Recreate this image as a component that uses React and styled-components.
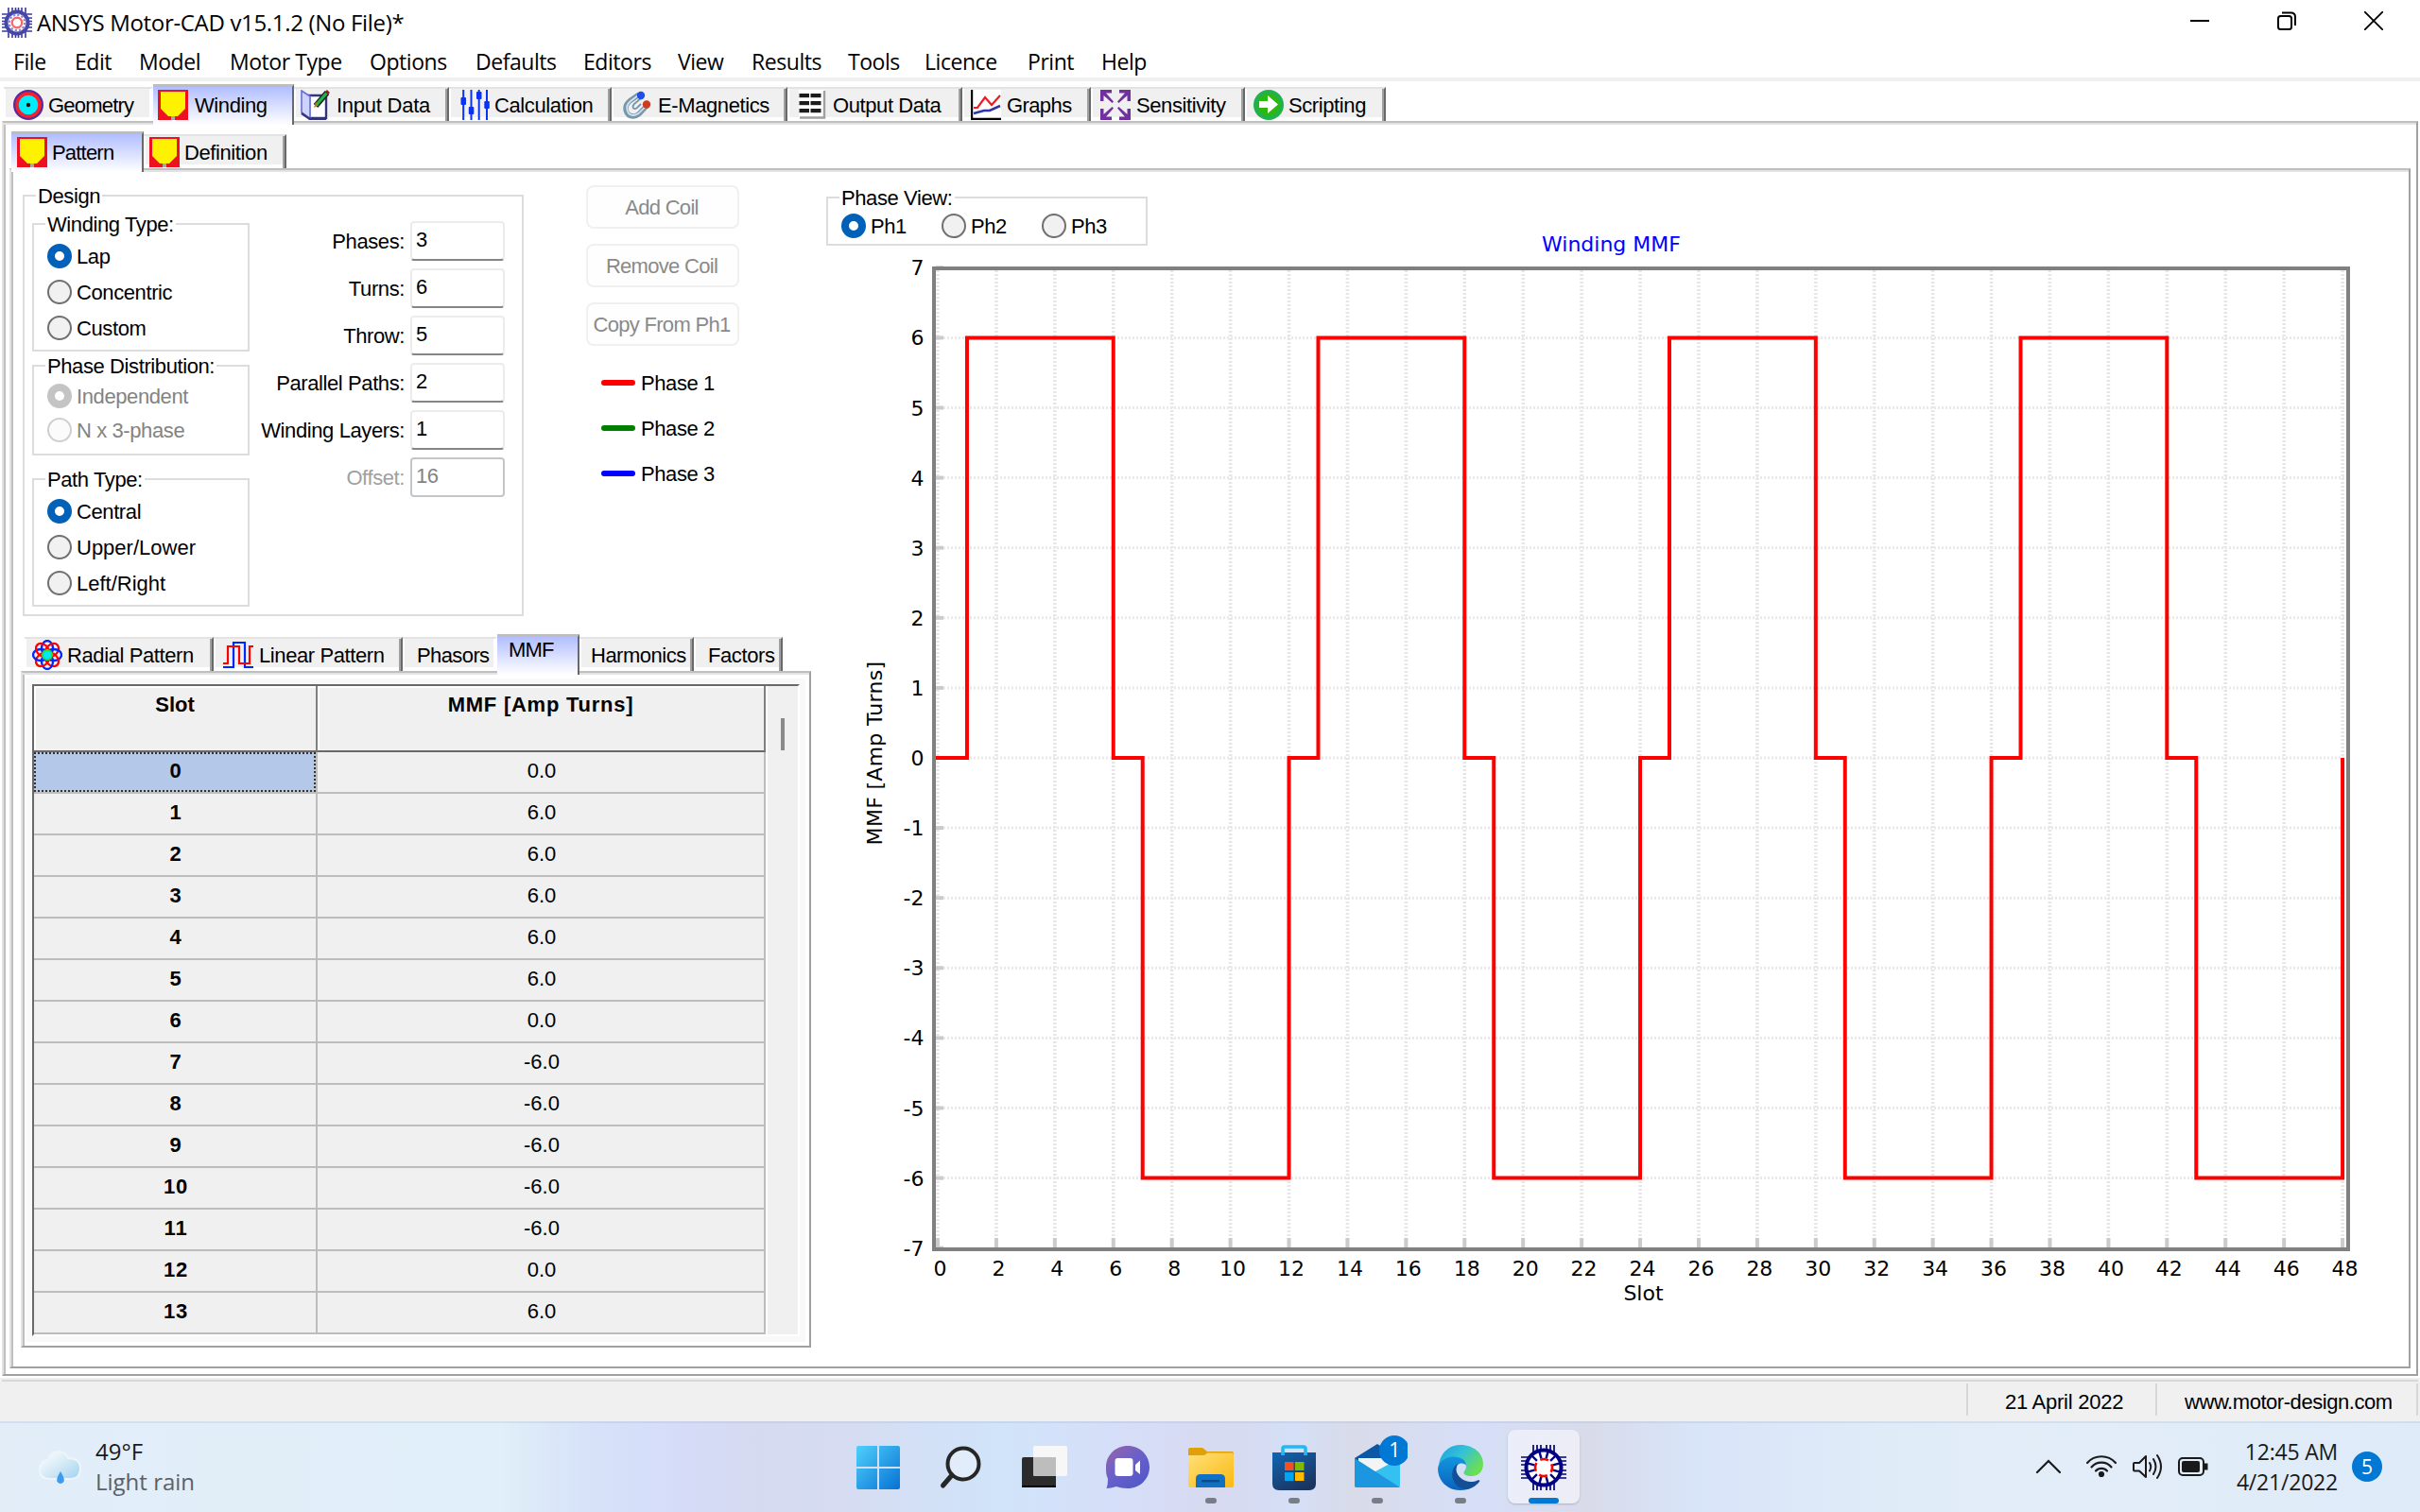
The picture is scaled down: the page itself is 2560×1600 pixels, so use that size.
import React from 'react';
import styled, { createGlobalStyle, css } from 'styled-components';

const UI = `"Liberation Sans", Arial, sans-serif`;
const SEGOE = `"Open Sans", "Noto Sans", sans-serif`;
const CHART = `"DejaVu Sans", Verdana, sans-serif`;

const GlobalStyle = createGlobalStyle`
  * { box-sizing: border-box; }
  body { margin: 0; background: #fff; }
`;

const Screen = styled.div`
  width: 2560px;
  height: 1600px;
  display: flex;
  flex-direction: column;
  overflow: hidden;
  background: #fff;
  color: #000;
  font: 22px/24px ${UI};
  letter-spacing: -0.4px;
  white-space: pre;
`;

/* ---------- title bar and menu ---------- */

const TitleBar = styled.header`
  height: 48px;
  display: flex;
  align-items: center;
  justify-content: space-between;
  padding: 0 39px 0 2px;
  font: 24px/30px ${SEGOE};
  letter-spacing: -0.33px;
`;
const TitleLeft = styled.div`
  display: flex;
  align-items: center;
  gap: 5px;
`;
const WindowButtons = styled.div`
  display: flex;
  gap: 72px;
  padding-bottom: 4px;
`;
const MenuBar = styled.nav`
  height: 38px;
  padding-left: 14px;
  border-bottom: 4px solid #f0f0f0;
  display: grid;
  grid-template-columns: 65px 68px 96px 148px 112px 114px 100px 78px 102px 81px 109px 78px 60px;
  align-items: center;
  font: 23px/30px ${SEGOE};
  letter-spacing: -0.45px;
`;

/* ---------- tabs and pages ---------- */

const TabStrip = styled.div`
  display: flex;
  align-items: flex-end;
  height: ${(p) => p.$h}px;
  padding-left: ${(p) => p.$left}px;
  flex: none;
`;
const TabBox = styled.div`
  width: ${(p) => p.$w}px;
  display: flex;
  align-items: center;
  padding-left: ${(p) => p.$pad}px;
  gap: ${(p) => p.$gap}px;
  flex: none;
  ${(p) =>
    p.$active
      ? css`
          height: 43px;
          margin-bottom: -4px;
          position: relative;
          z-index: 1;
          border-top: 3px solid #bdbdbd;
          border-right: 2px solid #696969;
          background: linear-gradient(#b1beff, #ffffff);
          padding-bottom: 2px;
        `
      : css`
          height: 36px;
          border-top: 2px solid #e3e3e3;
          border-right: 2px solid ${p.$tucked ? '#fff' : '#696969'};
          background: linear-gradient(#f0f0f0 30px, #fff 30px);
          box-shadow: inset 2px 0 #fff, inset -2px 0 ${p.$tucked ? '#fff' : '#a0a0a0'};
        `}
`;
const TabLabel = styled.span`
  padding-top: ${(p) => (p.$raised ? 0 : 2)}px;
  padding-bottom: ${(p) => (p.$raised ? 11 : 0)}px;
  letter-spacing: ${(p) => p.$ls ?? -0.4}px;
`;

const Page = styled.section`
  border-style: solid;
  border-width: 2px;
  border-color: #bfbfbf #a0a0a0 #a0a0a0 #e3e3e3;
  box-shadow: inset 0 2px #e3e3e3, inset 2px 0 #bfbfbf;
  display: flex;
  flex-direction: column;
  min-height: 0;
`;
const OuterPage = styled(Page)`
  margin: 0 2px 2px;
  height: 1328px;
  padding: 2px 6px 6px 6px;
`;
const InnerPage = styled(Page)`
  flex: 1;
  flex-direction: row;
  padding: 2px 0 0 2px;
`;
const LeftColumn = styled.div`
  width: 856px;
  display: flex;
  flex-direction: column;
`;
const RightColumn = styled.div`
  flex: 1;
  display: flex;
  flex-direction: column;
`;
const TopRow = styled.div`
  display: flex;
  align-items: flex-start;
  height: 489px;
  padding: 12px 0 0 10px;
  flex: none;
`;

/* ---------- groups, radios, fields ---------- */

const GroupBox = styled.fieldset`
  margin: 0;
  padding: 0;
  min-width: 0;
  width: ${(p) => p.$w}px;
  height: ${(p) => p.$h}px;
  border: 2px solid #dcdcdc;
`;
const GroupTitle = styled.legend`
  margin-left: 12px;
  padding: 2px 2px 0;
  line-height: 24px;
`;
const DesignBody = styled.div`
  display: flex;
  padding: 4px 0 0 8px;
`;
const GroupStack = styled.div`
  display: flex;
  flex-direction: column;
`;
const Spacer = styled.div`
  height: ${(p) => p.$h}px;
  flex: none;
`;
const RadioList = styled.div`
  display: flex;
  flex-direction: ${(p) => (p.$row ? 'row' : 'column')};
  padding: ${(p) => p.$top}px 0 0 14px;
`;
const RadioRow = styled.label`
  display: flex;
  align-items: center;
  gap: 5px;
  height: ${(p) => p.$h}px;
  width: ${(p) => (p.$w ? p.$w + 'px' : 'auto')};
  color: ${(p) => (p.$disabled ? '#838383' : '#000')};
`;
const Dot = styled.span`
  width: 26px;
  height: 26px;
  border-radius: 50%;
  flex: none;
  ${(p) =>
    p.$on
      ? css`
          border: 8px solid ${p.$disabled ? '#c4c4c4' : '#0160b8'};
          background: #fff;
        `
      : css`
          border: 2px solid ${p.$disabled ? '#cfcfcf' : '#707070'};
          background: ${p.$disabled ? '#fbfbfb' : '#f1f1f1'};
        `}
`;
const RadioText = styled.span`
  padding-top: 2px;
  letter-spacing: ${(p) => (p.$wide ? 0 : -0.4)}px;
`;
const Form = styled.div`
  width: 270px;
  display: flex;
  flex-direction: column;
  gap: 8px;
  padding-top: 10px;
`;
const FieldRow = styled.div`
  display: flex;
  justify-content: flex-end;
  align-items: center;
  gap: 6px;
  height: 42px;
  color: ${(p) => (p.$disabled ? '#a0a0a0' : '#000')};
`;
const FieldLabel = styled.span`
  padding-top: 2px;
`;
const FieldBox = styled.div`
  width: 100px;
  height: 42px;
  border: 2px solid ${(p) => (p.$disabled ? '#c3c6c9' : '#ececec')};
  border-bottom-color: ${(p) => (p.$disabled ? '#c3c6c9' : '#868686')};
  border-radius: 4px;
  padding: 6px 0 0 4px;
  color: ${(p) => (p.$disabled ? '#838383' : '#000')};
`;

const CoilColumn = styled.div`
  margin-left: 66px;
  padding-top: 2px;
  width: 162px;
  display: flex;
  flex-direction: column;
`;
const CoilButton = styled.button`
  width: 162px;
  height: 46px;
  margin: 0 0 16px;
  padding: 2px 2px 0 0;
  border: 2px solid #f0f0f0;
  border-radius: 8px;
  background: #fefefe;
  color: #8a8a8a;
  font: 22px/24px ${UI};
  letter-spacing: -0.7px;
`;
const PhaseKeys = styled.div`
  margin-top: -1px;
  display: flex;
  flex-direction: column;
`;
const PhaseKey = styled.div`
  display: flex;
  align-items: center;
  height: 48px;
  padding-left: 16px;
  gap: 6px;
`;
const Swatch = styled.span`
  width: 36px;
  height: 6px;
  border-radius: 3px;
  background: ${(p) => p.$c};
`;

/* ---------- MMF table ---------- */

const TablePage = styled(Page)`
  margin-left: 8px;
  width: 836px;
  height: 716px;
  padding: 6px 4px 4px 4px;
`;
const TableFrame = styled.div`
  background: #f9f9f9;
  height: 702px;
  padding: 6px 6px 0 6px;
`;
const GridArea = styled.div`
  display: flex;
  height: 690px;
  border-top: 2px solid #696969;
  border-left: 2px solid #696969;
  border-right: 2px solid #fff;
  border-bottom: 2px solid #fff;
  background: #f0f0f0;
`;
const Grid = styled.div`
  display: grid;
  width: 776px;
  grid-template-columns: 300px 474px;
  grid-template-rows: 70px;
  grid-auto-rows: 44px;
  border-right: 2px solid #fff;
  letter-spacing: 0;
`;
const HeadCell = styled.div`
  border-right: 2px solid #808080;
  border-bottom: 2px solid #696969;
  box-shadow: inset 2px 2px #fff;
  text-align: center;
  font-weight: bold;
  padding-top: 8px;
  letter-spacing: ${(p) => p.$ls}px;
`;
const Cell = styled.div`
  display: flex;
  border-right: 2px solid #bdbdbd;
  border-bottom: 2px solid #bdbdbd;
  ${(p) => p.$key && 'font-weight: bold; letter-spacing: 0.8px;'}
`;
const CellText = styled.span`
  flex: 1;
  text-align: center;
  border: 2px dotted ${(p) => (p.$selected ? '#3c3020' : 'transparent')};
  background: ${(p) => (p.$selected ? '#b4c9e9' : 'transparent')};
  padding: 6px 0 0 2px;
`;
const ScrollTrack = styled.div`
  flex: 1;
  display: flex;
  justify-content: center;
  align-items: flex-start;
  padding-top: 34px;
`;
const ScrollThumb = styled.div`
  width: 4px;
  height: 34px;
  background: #8a8a8a;
`;

/* ---------- chart ---------- */

const ChartHead = styled.div`
  display: flex;
  height: 88px;
  padding: 14px 0 0 4px;
  flex: none;
`;
const ChartTitle = styled.h1`
  margin: 0 0 0 417px;
  align-self: flex-end;
  font: 22px/22px ${CHART};
  letter-spacing: 0;
  color: #0000ff;
`;
const Plot = styled.svg`
  display: block;
  font: 22px ${CHART};
  letter-spacing: 0;
`;
const AxisTitle = styled.text`
  letter-spacing: 0.3px;
`;

/* ---------- status bar and taskbar ---------- */

const StatusBar = styled.footer`
  height: 46px;
  flex: none;
  background: #f0f0f0;
  padding: 2px 2px 0 2px;
`;
const StatusCells = styled.div`
  border-top: 2px solid #d7d7d7;
  height: 42px;
  padding: 2px 0 4px;
  display: flex;
  justify-content: flex-end;
`;
const StatusCell = styled.div`
  width: ${(p) => p.$w}px;
  border-left: 2px solid #d7d7d7;
  border-right: ${(p) => (p.$last ? '2px solid #d7d7d7' : '0')};
  display: flex;
  align-items: center;
  padding: 5px 0 0 ${(p) => p.$pad}px;
  letter-spacing: ${(p) => p.$ls}px;
`;
const Taskbar = styled.footer`
  height: 96px;
  flex: none;
  display: flex;
  align-items: center;
  background: linear-gradient(
    90deg,
    #e2edf8 0,
    #e1eff9 420px,
    #e0eff9 530px,
    #d7e2f8 620px,
    #d5dcf8 720px,
    #d5daf0 800px,
    #d6dcf1 890px,
    #d0e4fa 1060px,
    #d6def8 1180px,
    #d7daf0 1300px,
    #d4dff6 1370px,
    #d9dbe9 1430px,
    #d6dff8 1560px,
    #d9dbea 1680px,
    #d8e4f8 1790px,
    #e0ebf8 1980px,
    #e2edf8 2150px,
    #dfebf8 2560px
  );
  box-shadow: inset 0 2px rgba(120, 140, 180, 0.14);
  font: 24px/32px ${SEGOE};
`;
const Weather = styled.div`
  width: 885px;
  padding-left: 38px;
  display: flex;
  align-items: center;
  gap: 11px;
  letter-spacing: 0;
`;
const WeatherText = styled.div`
  display: flex;
  flex-direction: column;
  color: #1a1a1a;
`;
const Muted = styled.span`
  color: #5b6068;
`;
const Apps = styled.div`
  display: flex;
  flex: 1;
`;
const AppSlot = styled.div`
  width: 88px;
  height: 96px;
  display: flex;
  align-items: center;
  justify-content: center;
`;
const AppTile = styled.div`
  width: 76px;
  height: 78px;
  border-radius: 8px;
  display: flex;
  flex-direction: column;
  align-items: center;
  justify-content: flex-end;
  background: ${(p) => (p.$active ? 'rgba(255,255,255,0.5)' : 'transparent')};
  box-shadow: ${(p) => (p.$active ? '0 1px 2px rgba(90,100,130,0.35)' : 'none')};
`;
const Running = styled.span`
  margin-top: 8px;
  width: ${(p) => (p.$active ? 32 : 12)}px;
  height: 6px;
  border-radius: 3px;
  background: ${(p) => (p.$active ? '#0078d4' : p.$on ? '#787d88' : 'transparent')};
`;
const Tray = styled.div`
  display: flex;
  align-items: center;
  padding-right: 40px;
`;
const TrayIcons = styled.div`
  display: flex;
  align-items: center;
  gap: 16px;
  margin-right: 27px;
`;
const Chevron = styled.svg`
  margin-right: 7px;
`;
const Clock = styled.div`
  width: 110px;
  text-align: right;
  color: #1a1a1a;
  font-size: 23px;
  letter-spacing: -0.2px;
`;
const Notice = styled.span`
  margin-left: 15px;
  width: 32px;
  height: 32px;
  border-radius: 50%;
  background: #0078d4;
  color: #fff;
  text-align: center;
  font-size: 21px;
  letter-spacing: 0;
`;

/* ---------- icons ---------- */

const MotorIcon = ({ size = 48 }) => {
  const leads = [13, 17, 21, 27, 31, 35];
  return (
    <svg width={size} height={size} viewBox="0 0 48 48">
      <g stroke="#000080" strokeWidth="1.7">
        {leads.map((v) => (
          <path key={v} d={`M${v} 0V10M${v} 38V48M0 ${v}H10M38 ${v}H48`} />
        ))}
      </g>
      <circle cx="24" cy="24" r="18.5" fill="#fff" stroke="#000080" strokeWidth="4" />
      <g stroke="#000080" strokeWidth="2.4">
        {Array.from({ length: 12 }, (_, i) => (
          <path key={i} d="M24 6V14" transform={`rotate(${i * 30 + 15} 24 24)`} />
        ))}
      </g>
      <circle cx="24" cy="24" r="9" fill="#fff" stroke="#f00" strokeWidth="2.6" strokeDasharray="9 5.1" strokeDashoffset="4" />
    </svg>
  );
};

/* Small caption version: softer ring, teeth reaching the edge */
const MotorCaptionIcon = () => (
  <svg width="32" height="32" viewBox="0 0 32 32">
    <g stroke="#3a3a9e" strokeWidth="1.6">
      {[7, 11, 14.5, 17.5, 21, 25].map((v) => (
        <path key={v} d={`M${v} 0V32M0 ${v}H32`} />
      ))}
    </g>
    <circle cx="16" cy="16" r="11.5" fill="#fff" stroke="#4646a6" strokeWidth="4" />
    <circle cx="16" cy="16" r="8.6" fill="none" stroke="#8c8cd0" strokeWidth="3" strokeDasharray="2.4 2.1" />
    <circle cx="16" cy="16" r="5.200" fill="#fff" stroke="#f26a6a" strokeWidth="2.400" />
  </svg>
);

const Icon32 = ({ children }) => (
  <svg width="32" height="32" viewBox="0 0 32 32">
    {children}
  </svg>
);

const GeometryIcon = () => (
  <Icon32>
    <circle cx="16" cy="16" r="14" fill="#0ff" stroke="#5c2a9c" strokeWidth="4" />
    <circle cx="16" cy="16" r="12" fill="#00eefa" stroke="#f5212c" strokeWidth="3.4" />
    <circle cx="16" cy="16" r="2.2" fill="#111" />
  </Icon32>
);
const WindingIcon = () => (
  <Icon32>
    <rect width="32" height="32" fill="#ec1020" />
    <path d="M3 2H29V20L21 28H11L3 20Z" fill="#fff200" />
    <rect x="14" y="28" width="4" height="4" fill="#a8a8a8" />
  </Icon32>
);
const InputIcon = () => (
  <Icon32>
    <path d="M10 6H28V30H10Z" fill="#fff" stroke="#35357c" strokeWidth="2.4" />
    <path d="M2 1L11 7V31L2 24Z" fill="#cdd2ff" stroke="#6670d8" strokeWidth="1.6" />
    <path d="M2 25L11 31H28" fill="none" stroke="#33337a" strokeWidth="2.4" />
    <path d="M17 17L29 3" stroke="#222" strokeWidth="6" />
    <path d="M18 15.500L28.500 3.500" stroke="#22b14c" strokeWidth="3.4" />
    <path d="M15 19L17 13L20 16.500Z" fill="#b08020" />
    <path d="M28 1L31 4" stroke="#8a2020" strokeWidth="2.600" />
  </Icon32>
);
const CalcIcon = () => (
  <Icon32>
    <g fill="#0a32f0">
      <rect x="2.200" width="2" height="32" /><rect x="10.500" width="2" height="32" />
      <rect x="18.700" width="2" height="32" /><rect x="27" width="2" height="32" />
      <rect x="0.500" y="8" width="5.500" height="8" rx="1" /><rect x="8.800" y="18" width="5.500" height="8" rx="1" />
      <rect x="17" y="2" width="5.500" height="8" rx="1" /><rect x="25.300" y="12" width="5.500" height="8" rx="1" />
    </g>
  </Icon32>
);
const MagnetIcon = () => (
  <Icon32>
    <path d="M17 5L7 12C0 18 3 28 11 28C15 28 17 26 25 17" fill="none" stroke="#7797ad" strokeWidth="5.500" />
    <path d="M16 6L7.500 12.500C1.500 18 4.500 27 11 27C15 27 17 25 24 17.500" fill="none" stroke="#d4e2ea" strokeWidth="1.800" />
    <path d="M19 9L12 15C9 18 11 22 15 19L19 15" fill="none" stroke="#7797ad" strokeWidth="1.800" />
    <circle cx="19" cy="6" r="4.200" fill="#1f4fe8" />
    <circle cx="25" cy="15.500" r="4.200" fill="#d23a1f" />
  </Icon32>
);
const OutputIcon = () => (
  <Icon32>
    <path d="M0 0H27V29H0Z" fill="#fff" />
    <path d="M27 1V29.500H1" fill="none" stroke="#a0a0a0" strokeWidth="2.400" />
    <g fill="#1c1c1c">
      {[4, 12, 20].map((y) => (
        <React.Fragment key={y}>
          <rect x="0.500" y={y} width="10.500" height="4.200" />
          <rect x="12.500" y={y} width="11" height="4.200" />
        </React.Fragment>
      ))}
    </g>
  </Icon32>
);
const GraphIcon = () => (
  <Icon32>
    <rect width="32" height="32" fill="#fff" />
    <path d="M1 0V31H32" fill="none" stroke="#000" strokeWidth="2.400" />
    <path d="M3 19H7L15 8L22 16L31 6" fill="none" stroke="#ed1c24" strokeWidth="2.200" />
    <path d="M3 25L14 22H20L31 17" fill="none" stroke="#2b35a8" strokeWidth="2.600" />
  </Icon32>
);
const SensitivityIcon = () => (
  <Icon32>
    {[0, 90, 180, 270].map((a) => (
      <g key={a} transform={`rotate(${a} 16 16)`}>
        <path d="M0 0H12V3.500H6L14 12.500L12.500 14L3.500 6V12H0Z" fill="#722f9e" />
      </g>
    ))}
  </Icon32>
);
const ScriptIcon = () => (
  <Icon32>
    <circle cx="16" cy="16" r="16" fill="#22b14c" />
    <circle cx="16" cy="16" r="11.500" fill="#2db80f" />
    <path d="M6 12H15V6L26 15.500L15 25V19H6Z" fill="#fff" />
  </Icon32>
);
const RadialIcon = () => (
  <Icon32>
    {Array.from({ length: 8 }, (_, i) => (
      <ellipse key={i} cx="16" cy="9" rx="6" ry="8" fill="none" strokeWidth="2.300"
        stroke={i % 2 ? '#ff0000' : '#0026ff'} transform={`rotate(${i * 45} 16 16)`} />
    ))}
    <circle cx="16" cy="16" r="5" fill="#00e8ff" stroke="#19e23c" strokeWidth="2" />
  </Icon32>
);
const LinearIcon = () => (
  <Icon32>
    <path d="M0 29H11V3H23V29H32" fill="none" stroke="#0026ff" strokeWidth="2.200" />
    <path d="M0 25H5V7H17V25H28V7H32" fill="none" stroke="#ff0000" strokeWidth="2.200" />
  </Icon32>
);

const StartIcon = () => (
  <svg width="48" height="48" viewBox="0 0 48 48">
    <defs>
      <linearGradient id="st" x1="0" y1="0" x2="1" y2="1">
        <stop offset="0" stopColor="#4fd0fb" /><stop offset="1" stopColor="#0672d4" />
      </linearGradient>
    </defs>
    <path fill="url(#st)" d="M3 1H23V23H1V3Q1 1 3 1ZM25 1H45Q47 1 47 3V23H25ZM1 25H23V47H3Q1 47 1 45ZM25 25H47V45Q47 47 45 47H25Z" />
  </svg>
);
const SearchIcon = () => (
  <svg width="48" height="48" viewBox="0 0 48 48">
    <circle cx="26" cy="20" r="16.500" fill="rgba(255,255,255,.35)" stroke="#262626" strokeWidth="4" />
    <path d="M14 32L4.500 43" stroke="#262626" strokeWidth="5" strokeLinecap="round" />
  </svg>
);
const TaskViewIcon = () => (
  <svg width="48" height="48" viewBox="0 0 48 48">
    <rect x="0" y="13" width="36" height="32" rx="2" fill="#2b2b2b" />
    <rect x="0" y="43" width="36" height="2" fill="#000" />
    <rect x="12" y="1" width="36" height="32" rx="2" fill="#f7f7f7" />
    <path d="M12 13H36V33H14Q12 33 12 31Z" fill="#bdbdbd" />
  </svg>
);
const ChatIcon = () => (
  <svg width="48" height="48" viewBox="0 0 48 48">
    <defs>
      <linearGradient id="ch" x1="0" y1="0" x2="0.8" y2="1">
        <stop offset="0" stopColor="#9a65a8" /><stop offset=".5" stopColor="#6a60c8" /><stop offset="1" stopColor="#5058c8" />
      </linearGradient>
    </defs>
    <path d="M24 1C37 1 47 11 47 23.500C47 36 37 46 24 46C19 46 15 45 12 44Q6 46 1.500 46Q3 42 3 36C1 32 1 28 1 23.500C1 11 11 1 24 1Z" fill="url(#ch)" />
    <rect x="10.500" y="14" width="19" height="19" rx="3" fill="#fff" />
    <path d="M32 21L37 16.500V31L32 27Z" fill="#fff" />
  </svg>
);
const FolderIcon = () => (
  <svg width="48" height="48" viewBox="0 0 48 48">
    <defs>
      <linearGradient id="fo" x1="0" y1="0" x2="1" y2="1">
        <stop offset="0" stopColor="#ffe07a" /><stop offset="1" stopColor="#fbb911" />
      </linearGradient>
    </defs>
    <path d="M0 5Q0 3 2 3H14Q16 3 17.500 5L20 7H46Q48 7 48 9V20H0Z" fill="#e0a008" />
    <path d="M0 11H16Q18 11 20 8.500H46Q48 8.500 48 10.500V43Q48 45 46 45H2Q0 45 0 43Z" fill="url(#fo)" />
    <path d="M8 45V36Q8 31 13 31H34Q39 31 39 36V45Z" fill="#0f70c4" />
    <rect x="14" y="37" width="19" height="2.400" rx="1" fill="#0a4c8c" />
  </svg>
);
const StoreIcon = () => (
  <svg width="48" height="48" viewBox="0 0 48 48">
    <defs>
      <linearGradient id="sr" x1="0" y1="0" x2=".6" y2="1">
        <stop offset="0" stopColor="#1066b4" /><stop offset="1" stopColor="#1b3561" />
      </linearGradient>
    </defs>
    <path d="M1 8H47V41Q47 48 40 48H8Q1 48 1 41Z" fill="url(#sr)" />
    <path d="M12 11V4Q12 2 14 2H34Q36 2 36 4V11" fill="none" stroke="#21b8f3" strokeWidth="3.600" />
    <rect x="14" y="18" width="9.500" height="9" fill="#f25022" /><rect x="25" y="18" width="9.500" height="9" fill="#7fba00" />
    <rect x="14" y="29" width="9.500" height="9" fill="#00a4ef" /><rect x="25" y="29" width="9.500" height="9" fill="#ffb900" />
  </svg>
);
const MailIcon = () => (
  <svg width="64" height="62" viewBox="-8 -14 64 62">
    <path d="M0 14L24 -1L48 14V30H0Z" fill="#0b59a6" />
    <path d="M4 14H44V26L24 30L4 18Z" fill="#f4f4f6" />
    <path d="M48 14V43Q48 45 46 45H2Q0 45 0 43V40Z" fill="#35c0f2" />
    <path d="M0 14L48 45H2Q0 45 0 43Z" fill="#1c96de" />
    <circle cx="42" cy="6" r="16" fill="#0078d4" />
    <text x="42" y="13" fontSize="21" fill="#fff" textAnchor="middle">1</text>
  </svg>
);
const EdgeIcon = () => (
  <svg width="48" height="48" viewBox="0 0 48 48">
    <defs>
      <linearGradient id="ea" x1="0" y1="0" x2="1" y2=".6">
        <stop offset="0" stopColor="#1a9fe0" /><stop offset=".5" stopColor="#35c1d8" /><stop offset="1" stopColor="#6be04f" />
      </linearGradient>
      <linearGradient id="eb" x1="0" y1="0" x2="0" y2="1">
        <stop offset="0" stopColor="#1296de" /><stop offset="1" stopColor="#0a62bc" />
      </linearGradient>
    </defs>
    <path d="M1 21C3 8 12 0 24 0C38 0 48 9 48 20C48 28 43 33 36 33C30 33 27 31 27.500 29C28.500 27 30 26 30 22C30 17 24 13 17 13C8 13 3 17 1 21Z" fill="url(#ea)" />
    <path d="M17 12.500C24 12.500 30 16 30 22C29 19 20 17 19 26C18 36 26 42 34 42C38 42 41 41 44 38C40 44 33 48 24 48C9 48 0 37 0 25C1 17 8 12.500 17 12.500Z" fill="url(#eb)" />
    <path d="M21 20C16 23 14 30 16 36C18 43 24 47 30 47C37 46 42 42 44.500 38C44 37 43 37 42 37.500C32 42 21 36 19.500 27C19.500 24 20 22 21 20Z" fill="#124f96" />
  </svg>
);

/* ---------- data ---------- */

const MENUS = ['File', 'Edit', 'Model', 'Motor Type', 'Options', 'Defaults', 'Editors', 'View', 'Results', 'Tools', 'Licence', 'Print', 'Help'];

const MAIN_TABS = [
  { label: 'Geometry', icon: GeometryIcon, w: 158, pad: 10, gap: 5, tucked: true, ls: -0.8 },
  { label: 'Winding', icon: WindingIcon, w: 149, pad: 5, gap: 7, active: true },
  { label: 'Input Data', icon: InputIcon, w: 164, pad: 6, gap: 7, ls: -0.25 },
  { label: 'Calculation', icon: CalcIcon, w: 172, pad: 12, gap: 4 },
  { label: 'E-Magnetics', icon: MagnetIcon, w: 186, pad: 12, gap: 5 },
  { label: 'Output Data', icon: OutputIcon, w: 185, pad: 12, gap: 4 },
  { label: 'Graphs', icon: GraphIcon, w: 136, pad: 9, gap: 6, ls: -0.6 },
  { label: 'Sensitivity', icon: SensitivityIcon, w: 163, pad: 10, gap: 6 },
  { label: 'Scripting', icon: ScriptIcon, w: 149, pad: 9, gap: 5 },
];
const SUB_TABS = [
  { label: 'Pattern', icon: WindingIcon, w: 140, pad: 6, gap: 5, active: true, ls: -0.8 },
  { label: 'Definition', icon: WindingIcon, w: 151, pad: 6, gap: 5 },
];
const VIEW_TABS = [
  { label: 'Radial Pattern', icon: RadialIcon, w: 200, pad: 8, gap: 5 },
  { label: 'Linear Pattern', icon: LinearIcon, w: 200, pad: 10, gap: 6 },
  { label: 'Phasors', w: 100, pad: 15, tucked: true, ls: -0.6 },
  { label: 'MMF', w: 87, pad: 12, active: true, raised: true, ls: -0.8 },
  { label: 'Harmonics', w: 121, pad: 12, ls: -0.5 },
  { label: 'Factors', w: 94, pad: 15 },
];
const FIELDS = [
  ['Phases:', '3'],
  ['Turns:', '6'],
  ['Throw:', '5'],
  ['Parallel Paths:', '2'],
  ['Winding Layers:', '1'],
  ['Offset:', '16', true],
];
const mmfAt = (slot) => {
  const s = slot % 12;
  if (s === 0 || s === 6) return 0;
  return s < 6 ? 6 : -6;
};
const ROWS = Array.from({ length: 14 }, (_, slot) => mmfAt(slot));

/* ---------- composed parts ---------- */

const Tabs = ({ items, h, left }) => (
  <TabStrip $h={h} $left={left}>
    {items.map(({ label, icon: Icon, w, pad, gap, active, tucked, raised, ls }) => (
      <TabBox key={label} $w={w} $pad={pad} $gap={gap || 0} $active={active} $tucked={tucked}>
        {Icon && <Icon />}
        <TabLabel $raised={raised} $ls={ls}>{label}</TabLabel>
      </TabBox>
    ))}
  </TabStrip>
);

const Radios = ({ options, h, w, top, row, disabled }) => (
  <RadioList $top={top} $row={row}>
    {options.map((text, i) => (
      <RadioRow key={text} $h={h} $w={w} $disabled={disabled}>
        <Dot $on={i === 0} $disabled={disabled} />
        <RadioText $wide={text.includes('/')}>{text}</RadioText>
      </RadioRow>
    ))}
  </RadioList>
);

const Chart = () => {
  const X = (s) => 992 + s * 30.96;
  const Y = (v) => 802 - v * 74.1;
  const slots = Array.from({ length: 25 }, (_, i) => i * 2);
  const levels = Array.from({ length: 15 }, (_, i) => 7 - i);
  let d = `M990 ${Y(0)}`;
  for (let s = 1; s <= 48; s++) d += `H${X(s)}V${Y(mmfAt(s))}`;
  return (
    <Plot width="1678" height="1176" viewBox="870 270 1678 1176">
      <g stroke="#e6e6e6" strokeWidth="3.6" strokeDasharray="2 2">
        {slots.map((s) => <path key={s} d={`M${X(s)} 286V1320`} />)}
      </g>
      <g stroke="#e9e9e9" strokeWidth="3" strokeDasharray="2 2">
        {levels.slice(1, -1).map((v) => <path key={v} d={`M990 ${Y(v)}H2482`} />)}
      </g>
      <g stroke="#cbcbcb" strokeWidth="4">
        {slots.map((s) => <path key={s} d={`M${X(s)} 1310V1320`} />)}
        {levels.map((v) => <path key={v} d={`M990 ${Y(v)}H998`} />)}
      </g>
      <rect x="988" y="284" width="1496" height="1038" fill="none" stroke="#808080" strokeWidth="4" />
      <path d={d} fill="none" stroke="#ff0000" strokeWidth="4" />
      <g textAnchor="middle">
        {slots.map((s) => <text key={s} x={X(s) + 2.5} y="1350">{s}</text>)}
        <text x="1738.5" y="1376">Slot</text>
        <AxisTitle transform="translate(932.5 797) rotate(-90)">MMF [Amp Turns]</AxisTitle>
      </g>
      <g textAnchor="end">
        {levels.map((v) => <text key={v} x="977.5" y={Y(v) + 8}>{v}</text>)}
      </g>
    </Plot>
  );
};

const APPS = [
  { icon: StartIcon }, { icon: SearchIcon }, { icon: TaskViewIcon }, { icon: ChatIcon },
  { icon: FolderIcon, on: true }, { icon: StoreIcon, on: true }, { icon: MailIcon, on: true },
  { icon: EdgeIcon, on: true }, { icon: MotorIcon, active: true },
];

export default function App() {
  return (
    <Screen>
      <GlobalStyle />
      <TitleBar>
        <TitleLeft>
          <MotorCaptionIcon />
          <span>ANSYS Motor-CAD v15.1.2 (No File)*</span>
        </TitleLeft>
        <WindowButtons>
          <svg width="20" height="20"><path d="M0 10H20" stroke="#000" strokeWidth="2" /></svg>
          <svg width="20" height="20" fill="none" stroke="#000" strokeWidth="2">
            <rect x="1" y="5" width="14" height="14" rx="2.500" />
            <path d="M5 1.500H14.500Q19 1.500 19 6V15" />
          </svg>
          <svg width="20" height="20"><path d="M0 0L20 20M20 0L0 20" stroke="#000" strokeWidth="1.800" /></svg>
        </WindowButtons>
      </TitleBar>
      <MenuBar>{MENUS.map((m) => <span key={m}>{m}</span>)}</MenuBar>

      <Tabs items={MAIN_TABS} h={42} left={4} />
      <OuterPage>
        <Tabs items={SUB_TABS} h={46} left={2} />
        <InnerPage>
          <LeftColumn>
            <TopRow>
              <GroupBox $w={530} $h={458}>
                <GroupTitle>Design</GroupTitle>
                <DesignBody>
                  <GroupStack>
                    <GroupBox $w={230} $h={148}>
                      <GroupTitle>Winding Type:</GroupTitle>
                      <Radios options={['Lap', 'Concentric', 'Custom']} h={38} top={2} />
                    </GroupBox>
                    <Spacer $h={2} />
                    <GroupBox $w={230} $h={108}>
                      <GroupTitle>Phase Distribution:</GroupTitle>
                      <Radios options={['Independent', 'N x 3-phase']} h={36} top={1} disabled />
                    </GroupBox>
                    <Spacer $h={12} />
                    <GroupBox $w={230} $h={148}>
                      <GroupTitle>Path Type:</GroupTitle>
                      <Radios options={['Central', 'Upper/Lower', 'Left/Right']} h={38} top={2} />
                    </GroupBox>
                  </GroupStack>
                  <Form>
                    {FIELDS.map(([label, value, disabled]) => (
                      <FieldRow key={label} $disabled={disabled}>
                        <FieldLabel>{label}</FieldLabel>
                        <FieldBox $disabled={disabled}>{value}</FieldBox>
                      </FieldRow>
                    ))}
                  </Form>
                </DesignBody>
              </GroupBox>
              <CoilColumn>
                <CoilButton disabled>Add Coil</CoilButton>
                <CoilButton disabled>Remove Coil</CoilButton>
                <CoilButton disabled>Copy From Ph1</CoilButton>
                <PhaseKeys>
                  {['#ff0000', '#008000', '#0000ff'].map((c, i) => (
                    <PhaseKey key={c}>
                      <Swatch $c={c} />
                      <RadioText>Phase {i + 1}</RadioText>
                    </PhaseKey>
                  ))}
                </PhaseKeys>
              </CoilColumn>
            </TopRow>
            <Tabs items={VIEW_TABS} h={39} left={12} />
            <TablePage>
              <TableFrame>
                <GridArea>
                  <Grid>
                    <HeadCell $ls={0}>Slot</HeadCell>
                    <HeadCell $ls={0.75}>MMF [Amp Turns]</HeadCell>
                    {ROWS.map((v, slot) => (
                      <React.Fragment key={slot}>
                        <Cell $key><CellText $selected={slot === 0}>{slot}</CellText></Cell>
                        <Cell><CellText>{v.toFixed(1)}</CellText></Cell>
                      </React.Fragment>
                    ))}
                  </Grid>
                  <ScrollTrack><ScrollThumb /></ScrollTrack>
                </GridArea>
              </TableFrame>
            </TablePage>
          </LeftColumn>
          <RightColumn>
            <ChartHead>
              <GroupBox $w={340} $h={64}>
                <GroupTitle>Phase View:</GroupTitle>
                <Radios options={['Ph1', 'Ph2', 'Ph3']} h={34} w={106} top={0} row />
              </GroupBox>
              <ChartTitle>Winding MMF</ChartTitle>
            </ChartHead>
            <Chart />
          </RightColumn>
        </InnerPage>
      </OuterPage>

      <StatusBar>
        <StatusCells>
          <StatusCell $w={200} $pad={39} $ls={-0.25}>21 April 2022</StatusCell>
          <StatusCell $w={278} $pad={29} $ls={-0.45} $last>www.motor-design.com</StatusCell>
        </StatusCells>
      </StatusBar>

      <Taskbar>
        <Weather>
          <svg width="52" height="56" viewBox="0 0 52 56">
            <defs>
              <linearGradient id="cl" x1="0" y1="0" x2="1" y2="1">
                <stop offset="0" stopColor="#ffffff" /><stop offset=".5" stopColor="#d5eaf6" /><stop offset="1" stopColor="#9fd2f2" />
              </linearGradient>
            </defs>
            <path d="M15 41Q4 41 4 31Q4 22 13 21Q15 12 24 12Q31 12 34 19Q47 19 47 30Q47 41 36 41Z" fill="url(#cl)" stroke="#eef5fa" strokeWidth="2" />
            <path d="M26 33Q31 41 29.500 44Q26 48 22.500 44Q21 41 26 33Z" fill="#3f9bf2" />
          </svg>
          <WeatherText>
            <span>49°F</span>
            <Muted>Light rain</Muted>
          </WeatherText>
        </Weather>
        <Apps>
          {APPS.map(({ icon: Icon, on, active }, i) => (
            <AppSlot key={i}>
              <AppTile $active={active}>
                <Icon />
                <Running $on={on} $active={active} />
              </AppTile>
            </AppSlot>
          ))}
        </Apps>
        <Tray>
          <TrayIcons>
            <Chevron width="32" height="32" viewBox="0 0 32 32" fill="none" stroke="#1a1a1a" strokeWidth="2.200" strokeLinecap="round">
              <path d="M4 22L16 10L28 22" />
            </Chevron>
            <svg width="34" height="32" viewBox="0 0 34 32" fill="none" stroke="#1a1a1a" strokeWidth="2.200" strokeLinecap="round">
              <path d="M2 12C10 3 24 3 32 12M6.500 16.500C12 10 22 10 27.500 16.500M11 20.500C14 17 20 17 23 20.500" />
              <circle cx="17" cy="24" r="2" fill="#1a1a1a" />
            </svg>
            <svg width="32" height="32" viewBox="0 0 32 32" fill="none" stroke="#1a1a1a" strokeWidth="2" strokeLinecap="round" strokeLinejoin="round">
              <path d="M1 13Q1 12 2 12H7L14 5V27L7 20.500H2Q1 20.500 1 19.500ZM18 12Q20.500 16 18 20.500M22 8Q27 16 22 24M26 4Q34 16 26 28" />
            </svg>
            <svg width="32" height="32" viewBox="0 0 32 32" fill="none" stroke="#1a1a1a" strokeWidth="2">
              <rect x="1" y="7" width="26" height="18" rx="4" />
              <rect x="5" y="11" width="17" height="10" rx="1" fill="#1a1a1a" />
              <path d="M29 13.500H30.500V18.500H29Z" fill="#1a1a1a" />
            </svg>
          </TrayIcons>
          <Clock>12:45 AM{'\n'}4/21/2022</Clock>
          <Notice>5</Notice>
        </Tray>
      </Taskbar>
    </Screen>
  );
}
